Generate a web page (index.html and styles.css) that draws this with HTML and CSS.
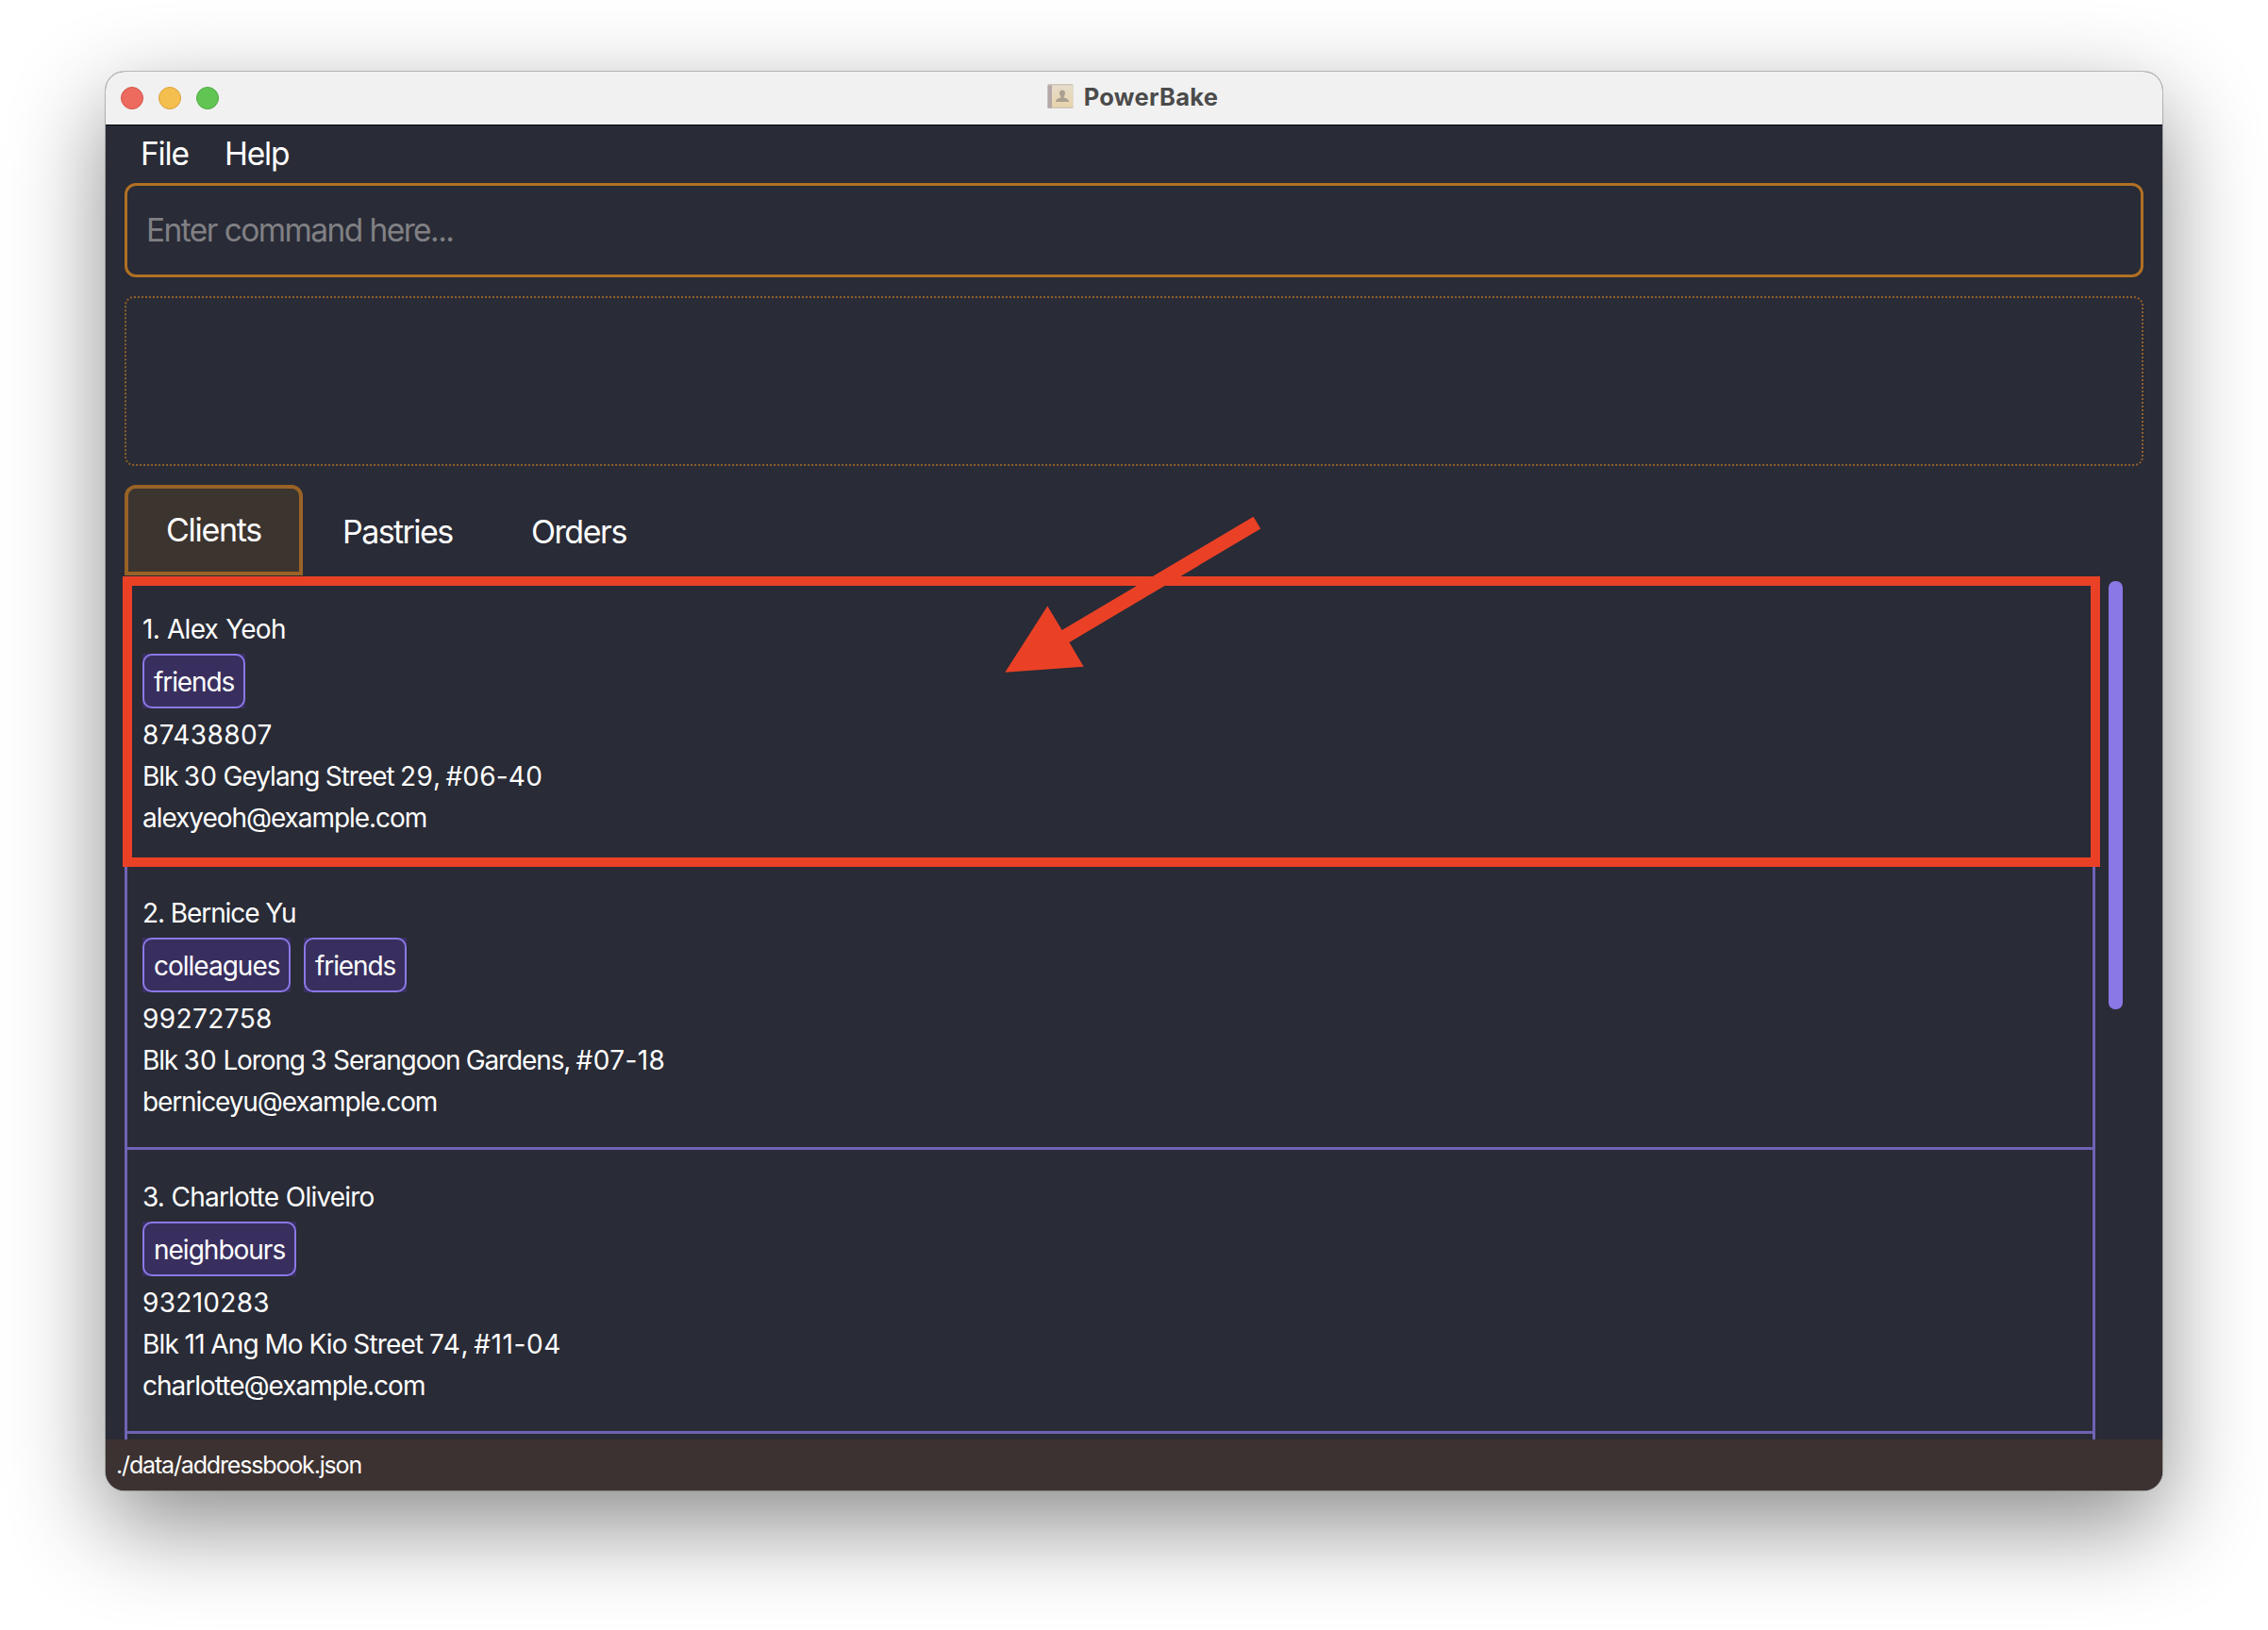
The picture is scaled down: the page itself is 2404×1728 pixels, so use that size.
FILE: index.html
```html
<!DOCTYPE html>
<html lang="en">
<head>
<meta charset="utf-8">
<title>PowerBake</title>
<link rel="stylesheet" href="styles.css">
</head>
<body>
<div class="window">
  <header class="titlebar">
    <div class="lights">
      <span class="light close"></span>
      <span class="light minimize"></span>
      <span class="light maximize"></span>
    </div>
    <div class="title">
      <svg class="book" width="28" height="28" viewBox="0 0 28 28">
        <defs>
          <linearGradient id="cover" x1="0" y1="0" x2="0" y2="1">
            <stop offset="0" stop-color="#e6dccb"/>
            <stop offset="1" stop-color="#e8d4ab"/>
          </linearGradient>
        </defs>
        <rect x="0.5" y="1" width="27" height="26" rx="1" fill="#cfc5b8"/>
        <rect x="5" y="2.500" width="22" height="23" fill="url(#cover)"/>
        <rect x="0.5" y="2.500" width="4.500" height="24" fill="#b3a8a7"/>
        <path d="M16 7.500c2 0 3 1.400 3 3.300 0 1.500-.7 2.600-1.300 3.300v1.500c1.500.8 5.300 1 5.300 4.400H9c0-3.400 3.800-3.600 5.300-4.400v-1.500c-.6-.7-1.300-1.800-1.300-3.300 0-1.900 1-3.300 3-3.300z" fill="#aaa091"/>
      </svg>
      <span class="title-text">PowerBake</span>
    </div>
  </header>

  <nav class="menubar">
    <span class="menu-file">File</span>
    <span class="menu-help">Help</span>
  </nav>

  <main class="content">
    <div class="command"><span class="placeholder">Enter command here...</span></div>
    <div class="result">
      <svg width="2140" height="180" viewBox="0 0 2140 180">
        <rect x="1" y="1" width="2138" height="178" rx="9"/>
      </svg>
    </div>

    <div class="tabs">
      <div class="tab selected">Clients</div>
      <div class="tab pastries">Pastries</div>
      <div class="tab orders">Orders</div>
    </div>

    <div class="list-area">
      <div class="list">
        <section class="card">
          <div class="name n1">1. Alex Yeoh</div>
          <div class="tags"><span class="tag friends"><span>friends</span></span></div>
          <div class="line phone">87438807</div>
          <div class="line address">Blk <span class="num">30</span> Geylang Street <span class="num">29</span>, <span class="num">#06-40</span></div>
          <div class="line e1">alexyeoh@example.com</div>
        </section>
        <section class="card">
          <div class="name n2">2. Bernice Yu</div>
          <div class="tags"><span class="tag colleagues"><span>colleagues</span></span><span class="tag friends"><span>friends</span></span></div>
          <div class="line phone">99272758</div>
          <div class="line address a2">Blk <span class="num">30</span> Lorong <span class="num">3</span> Serangoon Gardens, <span class="num">#07-18</span></div>
          <div class="line e2">berniceyu@example.com</div>
        </section>
        <section class="card">
          <div class="name n3">3. Charlotte Oliveiro</div>
          <div class="tags"><span class="tag neighbours"><span>neighbours</span></span></div>
          <div class="line phone p3">93210283</div>
          <div class="line address a3">Blk 11 Ang Mo Kio Street <span class="num">74</span>, <span class="num">#11-04</span></div>
          <div class="line e3">charlotte@example.com</div>
        </section>
        <section class="card"></section>
      </div>
      <div class="scrollbar"></div>
    </div>
  </main>

  <footer class="status"><span class="path">./data/addressbook.json</span></footer>
</div>

<div class="highlight"></div>
<svg class="arrow" width="280" height="170" viewBox="1060 545 280 170">
  <path d="M1065.300 712.800 1110.300 642.600 1125.700 667.900 1328.600 547.700 1336.200 560.500 1133.400 681.100 1148.700 706.800z" fill="#ea4126"/>
</svg>
</body>
</html>
```
FILE: styles.css
```css
* { box-sizing: border-box; }

body {
  margin: 0;
  width: 2404px;
  height: 1728px;
  padding: 76px 112px 0;
  background: #fff;
  overflow: hidden;
  font-family: "Inter", "Liberation Sans", sans-serif;
  color: #fff;
}

.window {
  display: flex;
  flex-direction: column;
  width: 2180px;
  height: 1504px;
  border-radius: 20px;
  overflow: hidden;
  background: #292b36;
  box-shadow: 0 0 0 1px rgba(0, 0, 0, .22), 0 36px 100px rgba(0, 0, 0, .46);
}

.titlebar {
  position: relative;
  flex: none;
  display: flex;
  align-items: center;
  justify-content: center;
  height: 57px;
  background: #f1f1f1;
  border-bottom: 1px solid #05060b;
}

.lights {
  position: absolute;
  left: 16px;
  top: 16px;
  display: flex;
  gap: 16px;
}

.light { width: 24px; height: 24px; border-radius: 50%; border: 1px solid; }
.close { background: #ec6a5e; border-color: #d55549; }
.minimize { background: #f5bf4f; border-color: #d8a03c; }
.maximize { background: #61c554; border-color: #4fa93f; }

.title { display: flex; align-items: center; gap: 11px; height: 56px; padding-right: 3px; }
.book { margin-top: -4px; }
.title-text {
  font-size: 25.500px;
  font-weight: 700;
  line-height: 52px;
  margin-bottom: 2px;
  color: #4b4b4b;
  letter-spacing: 0.3px;
}

.menubar {
  flex: none;
  display: flex;
  height: 61px;
  padding-left: 37px;
  font-size: 33.500px;
  line-height: 60px;
  letter-spacing: -1.200px;
}
.menu-file { width: 89px; }

.content {
  flex: 1;
  min-height: 0;
  display: flex;
  flex-direction: column;
  padding: 0 20px;
}

.command {
  flex: none;
  height: 100px;
  border: 3px solid #b07023;
  border-radius: 12px;
  padding-left: 20px;
  font-size: 33.500px;
  line-height: 94px;
  color: #808084;
}
.placeholder { letter-spacing: -1.580px; }

.result { flex: none; height: 180px; margin-top: 20px; }
.result svg { display: block; }
.result rect { fill: none; stroke: #8f602c; stroke-width: 2; stroke-dasharray: 2 2; }

.tabs {
  flex: none;
  display: flex;
  height: 96px;
  margin-top: 20px;
  font-size: 34px;
  letter-spacing: -1.450px;
}
.tab { height: 96px; line-height: 100px; white-space: nowrap; }
.selected {
  width: 189px;
  padding-left: 40px;
  line-height: 88px;
  border: 4px solid #996226;
  border-radius: 12px 12px 0 0;
  background: #3c342f;
  letter-spacing: -1.300px;
}
.pastries { width: 200px; padding-left: 42px; letter-spacing: -1.580px; }
.orders { padding-left: 42px; }

.list-area {
  flex: 1;
  min-height: 0;
  display: flex;
  gap: 14px;
  padding-top: 2px;
}
.list { width: 2089px; height: 914px; overflow: hidden; }
.card {
  height: 301px;
  border: 3px solid rgba(138, 120, 230, .72);
  border-bottom: 0;
  padding: 28px 16px 0;
  font-size: 28px;
  line-height: 44px;
  letter-spacing: -0.9px;
  white-space: nowrap;
}
.card:first-child { height: 303px; padding-top: 30px; }
.name, .line { height: 44px; }

.tags { display: flex; gap: 14px; margin: 4px 0 6px; }
.tag { display: block; height: 58px; background: #392f5f; letter-spacing: -1.100px; }
.tag span {
  display: block;
  height: 58px;
  line-height: 56px;
  border: 2px solid #8a78e6;
  border-radius: 10px;
  padding-left: 10px;
}
.friends { width: 109px; }
.colleagues { width: 157px; letter-spacing: -1px; }
.neighbours { width: 163px; letter-spacing: -1px; }

/* Digits are set wider than the letters beside them */
.phone { letter-spacing: .4px; }
.p3 { letter-spacing: .3px; }
.num { letter-spacing: .2px; }
.address { letter-spacing: -1px; word-spacing: -.5px; }
.a2 { letter-spacing: -1.120px; }
.a2 .num { letter-spacing: .4px; }
.a3 { letter-spacing: -.820px; }
.a3 .num { letter-spacing: .6px; }
.n1 { letter-spacing: -.720px; word-spacing: .8px; }
.n2 { letter-spacing: -1.080px; }
.n3 { letter-spacing: -.8px; word-spacing: .4px; }
.e1 { letter-spacing: -1.050px; }
.e2 { letter-spacing: -1.120px; }
.e3 { letter-spacing: -1px; }

.scrollbar {
  width: 15px;
  height: 454px;
  margin-top: 4px;
  border-radius: 7px;
  background: #8a78e6;
}

.status {
  flex: none;
  height: 54px;
  padding-left: 11px;
  background: #3c3231;
  font-size: 25px;
  line-height: 55px;
}
.path { letter-spacing: -1.160px; }

/* Callout drawn over the first client */
.highlight {
  position: absolute;
  left: 130px;
  top: 611px;
  width: 2096px;
  height: 308px;
  border: 10px solid #ea4126;
}
.arrow { position: absolute; left: 1060px; top: 545px; }
```
